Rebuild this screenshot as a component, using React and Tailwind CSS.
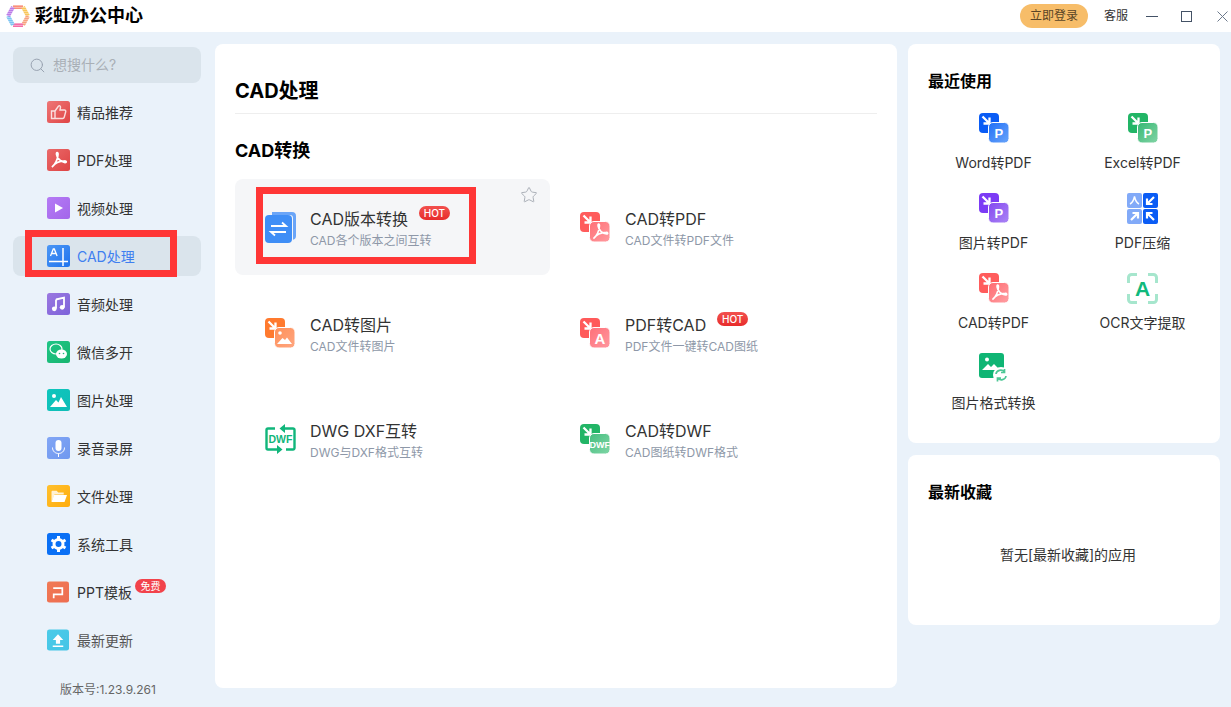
import React from "react";
import { Search, Star } from "lucide-react";

const ACROBAT = "M5 18C8 16 11 10 11 5.200C11 3 9.200 3 9.600 5.500C10.200 9.200 13.500 13 18 13.500C19.800 13.600 19.600 11.800 17.500 11.900C13 12 8 14 5 18Z";

const NavIcon = ({ from, to, w = 23, children }) => (
  <svg width={w} height="22" viewBox="0 0 23 22" className="shrink-0">
    <defs>
      <linearGradient id={`nav-${from}-${to}`} x1="0" y1="0" x2="1" y2="1">
        <stop offset="0" stopColor={from} />
        <stop offset="1" stopColor={to} />
      </linearGradient>
    </defs>
    <rect width="23" height="22" rx="2.500" fill={`url(#nav-${from}-${to})`} />
    {children}
  </svg>
);

const navItems = [
  {
    label: "精品推荐",
    icon: (
      <NavIcon from="#ee7777" to="#e04545">
        <path d="M4.500 10h3.500v7.500H4.500zM8 10l3.500-5c1.200-.8 2.200.2 2 1.500L13 9h4.500c1 0 1.500.8 1.200 1.800l-1.500 5.500c-.2.800-.8 1.200-1.600 1.200H8" fill="none" stroke="#fff" strokeOpacity=".8" strokeWidth="1.400" />
      </NavIcon>
    ),
  },
  {
    label: "PDF处理",
    icon: (
      <NavIcon from="#ea6a6a" to="#de4343">
        <path d={ACROBAT} fill="none" stroke="#fff" strokeWidth="1.800" />
      </NavIcon>
    ),
  },
  {
    label: "视频处理",
    icon: (
      <NavIcon from="#b57bf5" to="#a366ea">
        <path d="M8 6.500l8 4.500-8 4.500z" fill="#fff" />
      </NavIcon>
    ),
  },
  {
    label: "CAD处理",
    active: true,
    icon: (
      <NavIcon from="#4c97f5" to="#1f73ee">
        <path d="M3.500 11l2.800-7h1l2.800 7M4.700 8.500h4.200" fill="none" stroke="#fff" strokeWidth="1.300" />
        <path d="M2 16.500h19M16 3v18" stroke="#fff" strokeWidth="1.500" />
      </NavIcon>
    ),
  },
  {
    label: "音频处理",
    icon: (
      <NavIcon from="#9b78e0" to="#7d63da">
        <path d="M9 6.500l8-1.800v9.500" fill="none" stroke="#fff" strokeWidth="1.800" />
        <path d="M9 6.500v9" stroke="#fff" strokeWidth="1.800" />
        <circle cx="7.300" cy="15.800" r="2.400" fill="#fff" />
        <circle cx="15.200" cy="14.300" r="2.400" fill="#fff" />
      </NavIcon>
    ),
  },
  {
    label: "微信多开",
    icon: (
      <NavIcon from="#1fc586" to="#18b56f">
        <ellipse cx="9" cy="8" rx="6" ry="5" fill="none" stroke="#fff" strokeWidth="1.200" />
        <ellipse cx="14.500" cy="13" rx="5.500" ry="4.500" fill="#fff" />
        <circle cx="12.500" cy="12.500" r=".8" fill="#1fb97c" />
        <circle cx="16.500" cy="12.500" r=".8" fill="#1fb97c" />
      </NavIcon>
    ),
  },
  {
    label: "图片处理",
    icon: (
      <NavIcon from="#0fc6bd" to="#10bdb7">
        <circle cx="7" cy="7" r="2" fill="#fff" />
        <path d="M3 18l6-7 2.500 2.500L14 8l6 10z" fill="#fff" />
      </NavIcon>
    ),
  },
  {
    label: "录音录屏",
    icon: (
      <NavIcon from="#82a6f5" to="#6f98ef">
        <rect x="8.500" y="3" width="6" height="11" rx="3" fill="#fff" />
        <path d="M5.500 10.500c0 8 12 8 12 0M11.500 16.500V20" fill="none" stroke="#fff" strokeWidth="1" />
      </NavIcon>
    ),
  },
  {
    label: "文件处理",
    icon: (
      <NavIcon from="#ffc02e" to="#ffad0d">
        <path d="M4.500 17V7c0-.8.4-1.200 1.200-1.200h4l1.500 1.700h5.500v2H7.500z" fill="#fff" fillOpacity=".8" />
        <path d="M4.500 17l2.500-7h13l-2.500 7z" fill="#fff" />
      </NavIcon>
    ),
  },
  {
    label: "系统工具",
    icon: (
      <NavIcon from="#0a70f5" to="#0a70f5">
        <circle cx="11.500" cy="11" r="4.500" fill="none" stroke="#fff" strokeWidth="3" />
        <path d="M11.500 3v3M11.500 16v3M4.500 7l2.600 1.500M15.900 13.500l2.600 1.500M4.500 15l2.600-1.500M15.900 8.500L18.500 7" stroke="#fff" strokeWidth="3" />
      </NavIcon>
    ),
  },
  {
    label: "PPT模板",
    free: true,
    icon: (
      <NavIcon from="#f07a55" to="#ee6d50" w={22}>
        <path d="M6.500 7h9.500v6.500H7v4" fill="none" stroke="#fff" strokeWidth="1.800" />
      </NavIcon>
    ),
  },
  {
    label: "最新更新",
    muted: true,
    icon: (
      <NavIcon from="#4bcbe8" to="#45c4e6" w={22}>
        <path d="M11.500 5l5.500 6h-3.300v4h-4.400v-4H6zM6 16.800h11v1.400H6z" fill="#fff" />
      </NavIcon>
    ),
  },
];

// two overlapping squares with the arrow, used by most of the tools
const ConvertIcon = ({ id, back, front, frontEnd, children }) => (
  <svg width="30" height="30" viewBox="0 0 30 30" className="shrink-0">
    <defs>
      <linearGradient id={id} x1="0" y1="0" x2="1" y2="1">
        <stop offset="0" stopColor={front} />
        <stop offset="1" stopColor={frontEnd} />
      </linearGradient>
    </defs>
    <rect width="20" height="20" rx="4" fill={back} />
    <path d="M3.500 3.500l6.500 6.500M10.500 4.500v6h-6" fill="none" stroke="#fff" strokeWidth="2.300" />
    <rect x="9.500" y="9.500" width="20.500" height="20.500" rx="4.500" fill={`url(#${id})`} stroke="#fff" strokeWidth="1" />
    {children}
  </svg>
);

const LetterP = () => (
  <text x="19.800" y="24.500" textAnchor="middle" fontSize="13" fontWeight="700" fill="#fff" fontFamily="Liberation Sans, sans-serif">
    P
  </text>
);

const PdfGlyph = () => <path d={ACROBAT} transform="translate(8.500 8.500)" fill="none" stroke="#fff" strokeWidth="1.600" />;

const VersionIcon = () => (
  <svg width="31" height="31" viewBox="0 0 31 31" className="shrink-0">
    <path d="M7 0h20a4 4 0 0 1 4 4v20a4 4 0 0 1-3 3.800V6a3 3 0 0 0-3-3H7z" fill="#6aa5f8" />
    <rect y="3" width="27" height="28" rx="4" fill="#3f8ef6" />
    <path d="M6 14h15l-4-3.500M21 20H6l4 3.500" fill="none" stroke="#fff" strokeWidth="1.800" />
  </svg>
);

const PictureIcon = () => (
  <ConvertIcon id="cad-img" back="#ff7a2e" front="#ff9058" frontEnd="#ffa680">
    <circle cx="15" cy="15" r="1.800" fill="#fff" />
    <path d="M12 26l5.500-6 2.500 2 2-2.500 5 6.500z" fill="#fff" />
  </ConvertIcon>
);

const DwgIcon = () => (
  <svg width="31" height="30" viewBox="0 0 31 30" className="shrink-0">
    <path d="M10 4.500H3a1.500 1.500 0 0 0-1.500 1.500v18a1.500 1.500 0 0 0 1.500 1.500h10M19 4.500h9a1.500 1.500 0 0 1 1.500 1.500v18a1.500 1.500 0 0 1-1.500 1.500h-7" fill="none" stroke="#10b67b" strokeWidth="2.400" />
    <path d="M20 0v9l-5.500-4.500zM12 21v9l5.500-4.500z" fill="#10b67b" />
    <text x="15.500" y="19" textAnchor="middle" fontSize="10.500" fontWeight="700" fill="#10b67b" fontFamily="Liberation Sans, sans-serif">
      DWF
    </text>
  </svg>
);

const tools = [
  [
    {
      title: "CAD版本转换",
      sub: "CAD各个版本之间互转",
      hot: true,
      selected: true,
      icon: <VersionIcon />,
    },
    {
      title: "CAD转PDF",
      sub: "CAD文件转PDF文件",
      icon: (
        <ConvertIcon id="cad-pdf" back="#ff5c5c" front="#ff7076" frontEnd="#ff9ba0">
          <PdfGlyph />
        </ConvertIcon>
      ),
    },
  ],
  [
    { title: "CAD转图片", sub: "CAD文件转图片", icon: <PictureIcon /> },
    {
      title: "PDF转CAD",
      sub: "PDF文件一键转CAD图纸",
      hot: true,
      icon: (
        <ConvertIcon id="pdf-cad" back="#ff5a5a" front="#ff6f78" frontEnd="#ff98a0">
          <text x="19.800" y="25.500" textAnchor="middle" fontSize="15" fontWeight="700" fill="#fff" fontFamily="Liberation Sans, sans-serif">
            A
          </text>
        </ConvertIcon>
      ),
    },
  ],
  [
    { title: "DWG DXF互转", sub: "DWG与DXF格式互转", icon: <DwgIcon /> },
    {
      title: "CAD转DWF",
      sub: "CAD图纸转DWF格式",
      icon: (
        <ConvertIcon id="cad-dwf" back="#22b566" front="#44bd7e" frontEnd="#80d6a6">
          <text x="19.800" y="23.500" textAnchor="middle" fontSize="9" fontWeight="700" fill="#fff" fontFamily="Liberation Sans, sans-serif">
            DWF
          </text>
        </ConvertIcon>
      ),
    },
  ],
];

const recent = [
  {
    label: "Word转PDF",
    icon: (
      <ConvertIcon id="r-word" back="#0a5cf5" front="#1f6ff7" frontEnd="#6aa5fa">
        <LetterP />
      </ConvertIcon>
    ),
  },
  {
    label: "Excel转PDF",
    icon: (
      <ConvertIcon id="r-excel" back="#22b566" front="#35b873" frontEnd="#84d4a6">
        <LetterP />
      </ConvertIcon>
    ),
  },
  {
    label: "图片转PDF",
    icon: (
      <ConvertIcon id="r-img" back="#7c3bf5" front="#8347f0" frontEnd="#ab86f5">
        <LetterP />
      </ConvertIcon>
    ),
  },
  {
    label: "PDF压缩",
    icon: (
      <svg width="31" height="31" viewBox="0 0 31 31">
        <rect width="15" height="15" rx="2" fill="#82aaf8" />
        <rect x="16" width="15" height="15" rx="2" fill="#0a5cf5" />
        <rect y="16" width="15" height="15" rx="2" fill="#82aaf8" />
        <rect x="16" y="16" width="15" height="15" rx="2" fill="#0a5cf5" />
        <path d="M3 11c2-1 3.500-3 4.500-7.500C8.500 8 10 10 12 11" fill="none" stroke="#fff" strokeWidth="1.400" />
        <path d="M27 4l-7 7M20 5.500V11h5.500M4 27l7-7M5.500 20H11v5.500M27 27l-7-7M20 25.500V20h5.500" fill="none" stroke="#fff" strokeWidth="2.200" />
      </svg>
    ),
  },
  {
    label: "CAD转PDF",
    icon: (
      <ConvertIcon id="r-cad" back="#ff5c5c" front="#ff6a70" frontEnd="#ffa0a4">
        <PdfGlyph />
      </ConvertIcon>
    ),
  },
  {
    label: "OCR文字提取",
    icon: (
      <svg width="31" height="31" viewBox="0 0 31 31">
        <path d="M10 1.500H4.500a3 3 0 0 0-3 3V10M21 1.500h5.500a3 3 0 0 1 3 3V10M10 29.500H4.500a3 3 0 0 1-3-3V21M21 29.500h5.500a3 3 0 0 0 3-3V21" fill="none" stroke="#a6e6cd" strokeWidth="3" />
        <text x="15.500" y="23" textAnchor="middle" fontSize="21" fontWeight="700" fill="#10b97c" fontFamily="Liberation Sans, sans-serif">
          A
        </text>
      </svg>
    ),
  },
  {
    label: "图片格式转换",
    icon: (
      <svg width="30" height="30" viewBox="0 0 30 30">
        <rect width="25" height="25" rx="3" fill="#0fb574" />
        <circle cx="8" cy="6.500" r="2" fill="#fff" />
        <path d="M3 17l6-6 3 3 3-3 6 6z" fill="#fff" />
        <circle cx="22" cy="22" r="8" fill="#fff" />
        <path d="M17 21c.5-4 6-5 8.500-2M27 23c-.5 4-6 5-8.500 2M25.500 16v3.500H22M18.500 28.500V25H22" fill="none" stroke="#4dc795" strokeWidth="1.700" />
      </svg>
    ),
  },
];

const Logo = () => (
  <svg width="24" height="22" viewBox="0 0 24 22" className="shrink-0">
    <defs>
      <pattern id="logo-stripes" width="2" height="2" patternUnits="userSpaceOnUse">
        <rect width="2" height="0.8" fill="#fff" fillOpacity=".45" />
      </pattern>
    </defs>
    <path d="M7 2h10" stroke="#f98f7a" strokeWidth="4" />
    <path d="M17 2l5 9" stroke="#f8c65a" strokeWidth="4" />
    <path d="M22 11l-5 9" stroke="#f7a27e" strokeWidth="4" />
    <path d="M17 20H7" stroke="#f46fa8" strokeWidth="4" />
    <path d="M7 20L2 11" stroke="#7cc4f2" strokeWidth="4" />
    <path d="M2 11l5-9" stroke="#bb7be8" strokeWidth="4" />
    <rect width="24" height="22" fill="url(#logo-stripes)" />
  </svg>
);

const HotBadge = () => (
  <span className="ml-[11px] -mt-[13px] flex h-[14px] w-[31px] items-center justify-center rounded-full bg-gradient-to-b from-[#f2504e] to-[#e72a2a] text-[10px] font-medium text-white">
    HOT
  </span>
);

const ToolItem = ({ title, sub, hot, selected, icon }) => (
  <div className={`relative flex h-[96px] w-[315px] items-center pl-[30px] ${selected ? "rounded-lg bg-[#f5f6f8]" : ""}`}>
    <div className="flex w-[45px] shrink-0 items-center">{icon}</div>
    <div className="mt-[4px] flex flex-col">
      <div className="flex items-center text-base leading-[22px] text-[#333333]">
        {title}
        {hot && <HotBadge />}
      </div>
      <div className="mt-[2px] text-xs leading-[18px] text-[#8e98a8]">{sub}</div>
    </div>
    {selected && (
      <>
        <Star size={18} strokeWidth={1.3} className="absolute right-[12px] top-[7px] text-[#a9aeb6]" />
        <div className="absolute left-[21px] top-[8px] h-[77px] w-[220px] border-[7px] border-[#ff3636]" />
      </>
    )}
  </div>
);

const App = () => {
  return (
    <div className="flex h-[707px] w-[1231px] flex-col overflow-hidden bg-[#eaf2fa] font-['Inter','Noto_Sans_CJK_SC',sans-serif] text-[#333333]">
      <header className="flex h-8 shrink-0 items-center bg-white pl-[6px]">
        <Logo />
        <span className="ml-[5px] text-lg font-bold leading-none text-black">彩虹办公中心</span>
        <div className="ml-auto flex items-center">
          <button className="h-6 w-[68px] rounded-full bg-[#f7bd69] text-xs text-[#5a4526]">立即登录</button>
          <span className="ml-4 text-xs text-[#333333]">客服</span>
          <svg width="12" height="12" viewBox="0 0 12 12" className="ml-[18px] text-[#445266]">
            <path d="M0 6.500h12" stroke="currentColor" strokeWidth="1" />
          </svg>
          <svg width="11" height="11" viewBox="0 0 11 11" className="ml-[23px] text-[#445266]">
            <rect x=".5" y=".5" width="10" height="10" fill="none" stroke="currentColor" strokeWidth="1" />
          </svg>
          <svg width="11" height="11" viewBox="0 0 11 11" className="ml-[25px] mr-[3px] text-[#6d7a8c]">
            <path d="M.5.5l10 10M10.500.5l-10 10" stroke="currentColor" strokeWidth="1" />
          </svg>
        </div>
      </header>

      <div className="flex min-h-0 flex-1 pb-[19px]">
        <aside className="flex w-[215px] shrink-0 flex-col px-[13px] pt-[15px]">
          <div className="flex h-9 w-[188px] shrink-0 items-center rounded-lg bg-[#dae4ec] pl-[16px] text-sm text-[#a9afb6]">
            <Search size={17} strokeWidth={1.4} className="text-[#98a2b0]" />
            <span className="ml-[7px]">想搜什么?</span>
          </div>
          <nav className="relative mt-[9px] flex w-[188px] shrink-0 flex-col gap-2">
            {navItems.map((item) => (
              <div
                key={item.label}
                className={`flex h-10 items-center rounded-lg pl-[34px] text-sm ${item.active ? "bg-[#dae4ec] text-[#3f7ff0]" : item.muted ? "text-[#555555]" : "text-[#333333]"}`}
              >
                {item.icon}
                <span className={item.icon.props.w ? "ml-[8px] pt-[2px]" : "ml-[7px] pt-[2px]"}>{item.label}</span>
                {item.free && (
                  <span className="-mt-[12px] ml-[3px] flex h-[14px] w-[31px] items-center justify-center rounded-full bg-[#f2434b] text-[10px] text-white">
                    免费
                  </span>
                )}
              </div>
            ))}
            <div className="absolute left-[12px] top-[138px] h-[47px] w-[152px] border-[7px] border-[#ff3636]" />
          </nav>
          <div className="mt-[22px] shrink-0 pl-[47px] text-xs leading-4 text-[#666666]">版本号:1.23.9.261</div>
        </aside>

        <main className="mt-3 flex w-[682px] shrink-0 flex-col rounded-lg bg-white px-5">
          <h1 className="h-[70px] shrink-0 border-b border-[#eeeeee] pt-[35px] text-xl font-bold leading-6 text-black">CAD处理</h1>
          <h2 className="mt-[24px] text-lg font-bold leading-[26px] text-black">CAD转换</h2>
          <div className="mt-[15px] flex flex-col gap-[10px]">
            {tools.map((row, i) => (
              <div key={i} className="flex">
                {row.map((tool) => (
                  <ToolItem key={tool.title} {...tool} />
                ))}
              </div>
            ))}
          </div>
        </main>

        <div className="ml-[11px] mt-3 flex w-[312px] shrink-0 flex-col gap-3">
          <section className="h-[399px] rounded-lg bg-white px-5 pt-[26px]">
            <h3 className="-mt-[1px] text-base font-bold leading-6 text-black">最近使用</h3>
            <div className="mt-[20px] grid grid-cols-[149px_149px] -ml-[9px]">
              {recent.map((r) => (
                <div key={r.label} className="flex h-[80px] flex-col items-center">
                  <div className="h-[31px]">{r.icon}</div>
                  <span className="mt-[9px] text-sm leading-5 text-[#333333]">{r.label}</span>
                </div>
              ))}
            </div>
          </section>
          <section className="h-[170px] rounded-lg bg-white px-5 pt-[25px]">
            <h3 className="text-base font-bold leading-6 text-black">最新收藏</h3>
            <p className="mt-[41px] pl-2 text-center text-sm leading-5 text-[#333333]">暂无[最新收藏]的应用</p>
          </section>
        </div>
      </div>
    </div>
  );
};

export default App;
